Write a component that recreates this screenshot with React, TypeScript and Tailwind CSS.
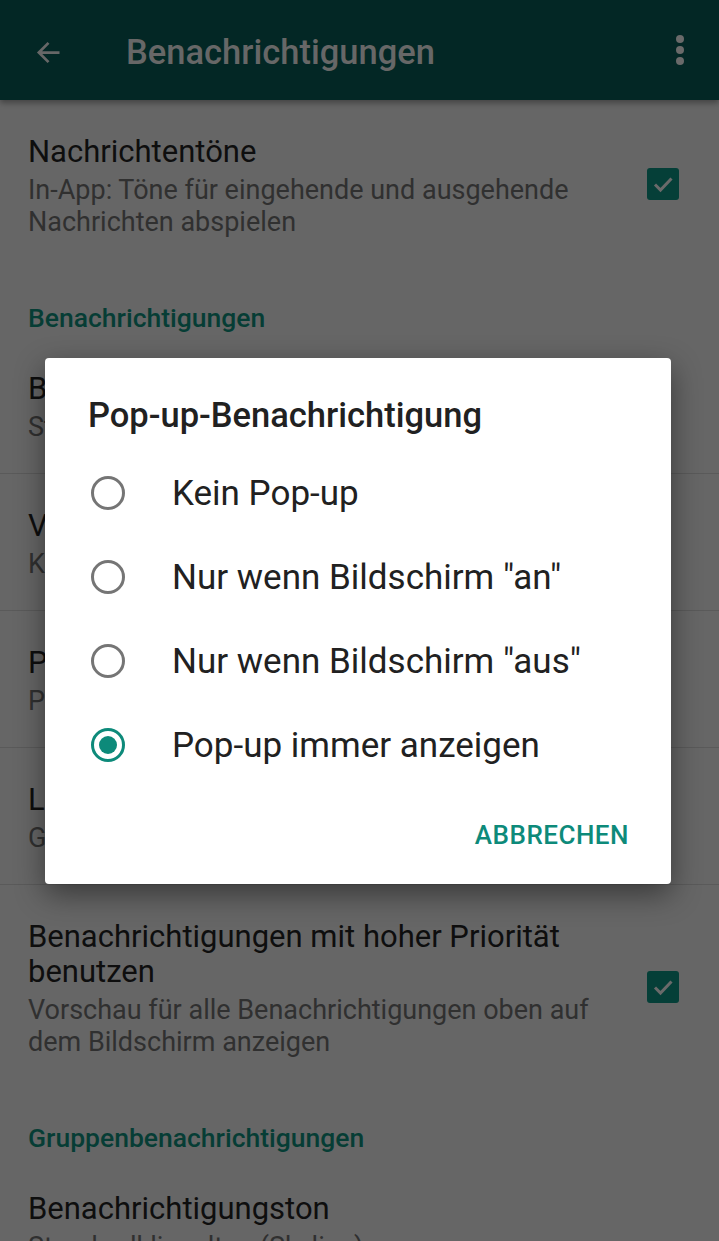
import React from "react";

const font = { fontFamily: "Roboto, 'Noto Sans', 'Liberation Sans', sans-serif" };

function Check() {
  return (
    <div className="w-[32px] h-[32px] rounded-[3px] bg-[#053f38] flex items-center justify-center shrink-0">
      <svg width="24" height="24" viewBox="0 0 24 24">
        <path d="M4 12.5 L9.5 18 L20.5 6.5" fill="none" stroke="#6a6a6a" strokeWidth="3" />
      </svg>
    </div>
  );
}

function Row({ title, sub, check, border }: { title: React.ReactNode; sub: React.ReactNode; check?: boolean; border?: boolean }) {
  return (
    <div className={"flex items-center pl-[28px] pr-[40px] " + (border ? "border-b border-[#5a5a5a]" : "")}>
      <div className="flex-1 pt-[34px] pb-[30px] whitespace-nowrap">
        <div className="text-[31px] leading-[35px] text-[#0e0e0e]">{title}</div>
        <div className="mt-[5px] text-[27px] leading-[32px] text-[#303030]">{sub}</div>
      </div>
      {check && <div className="ml-[20px]"><Check /></div>}
    </div>
  );
}

function Section({ label }: { label: string }) {
  return (
    <div className="pl-[28px] pt-[35px] pb-[4px] text-[26.5px] leading-[30px] font-medium text-[#063d35]">{label}</div>
  );
}

function Radio({ on }: { on?: boolean }) {
  return (
    <div
      className={
        "w-[34px] h-[34px] rounded-full border-[3px] flex items-center justify-center shrink-0 " +
        (on ? "border-[#0d8a7a]" : "border-[#757575]")
      }
    >
      {on && <div className="w-[18px] h-[18px] rounded-full bg-[#0d8a7a]" />}
    </div>
  );
}

export default function App() {
  const options = ["Kein Pop-up", 'Nur wenn Bildschirm "an"', 'Nur wenn Bildschirm "aus"', "Pop-up immer anzeigen"];
  return (
    <div className="relative w-[719px] h-[1241px] overflow-hidden bg-[#666666]" style={font}>
      <div className="h-[100px] pt-[4px] bg-[#032725] flex items-center shadow-[0_3px_6px_rgba(0,0,0,0.35)] relative z-10">
        <div className="w-[126px] pl-[32px]">
          <svg width="33" height="33" viewBox="0 0 24 24">
            <path d="M20 12H5.5 M12 5 L5 12 L12 19" fill="none" stroke="#676767" strokeWidth="2" />
          </svg>
        </div>
        <div className="flex-1 text-[34.5px] font-medium text-[#676767] leading-none">Benachrichtigungen</div>
        <div className="w-[78px] flex flex-col items-center gap-[3px] pb-[4px]">
          <div className="w-[8px] h-[8px] rounded-full bg-[#6a6a6a]" />
          <div className="w-[8px] h-[8px] rounded-full bg-[#6a6a6a]" />
          <div className="w-[8px] h-[8px] rounded-full bg-[#6a6a6a]" />
        </div>
      </div>

      <Row title="Nachrichtentöne" sub={<>In-App: Töne für eingehende und ausgehende<br />Nachrichten abspielen</>} check />
      <Section label="Benachrichtigungen" />
      <Row title="Benachrichtigungston" sub="Standardklingelton (Skyline)" border />
      <Row title="Vibration" sub="Kurz" border />
      <Row title="Pop-up-Benachrichtigung" sub="Pop-up immer anzeigen" border />
      <Row title="Licht" sub="Grün" border />
      <Row
        title={<>Benachrichtigungen mit hoher Priorität<br />benutzen</>}
        sub={<>Vorschau für alle Benachrichtigungen oben auf<br />dem Bildschirm anzeigen</>}
        check
      />
      <Section label="Gruppenbenachrichtigungen" />
      <Row title="Benachrichtigungston" sub="Standardklingelton (Skyline)" />

      <div className="absolute inset-0 z-20 flex items-center pl-[45px]">
        <div className="w-[626px] bg-white rounded-[4px] shadow-[0_10px_30px_rgba(0,0,0,0.45)] pt-[39px] pb-[24px]">
          <div className="pl-[43px] text-[34.5px] leading-[36px] font-medium text-[#212121]">Pop-up-Benachrichtigung</div>
          <div className="mt-[18px]">
            {options.map((o, i) => (
              <div key={o} className="h-[84px] flex items-center pl-[46px]">
                <Radio on={i === 3} />
                <div className="ml-[47px] pt-[3px] text-[35px] text-[#212121]">{o}</div>
              </div>
            ))}
          </div>
          <div className="mt-[25px] h-[48px] flex items-center justify-end pr-[42px]">
            <div className="text-[26px] font-medium text-[#0d8a7a] tracking-[0.5px]">ABBRECHEN</div>
          </div>
        </div>
      </div>
    </div>
  );
}
